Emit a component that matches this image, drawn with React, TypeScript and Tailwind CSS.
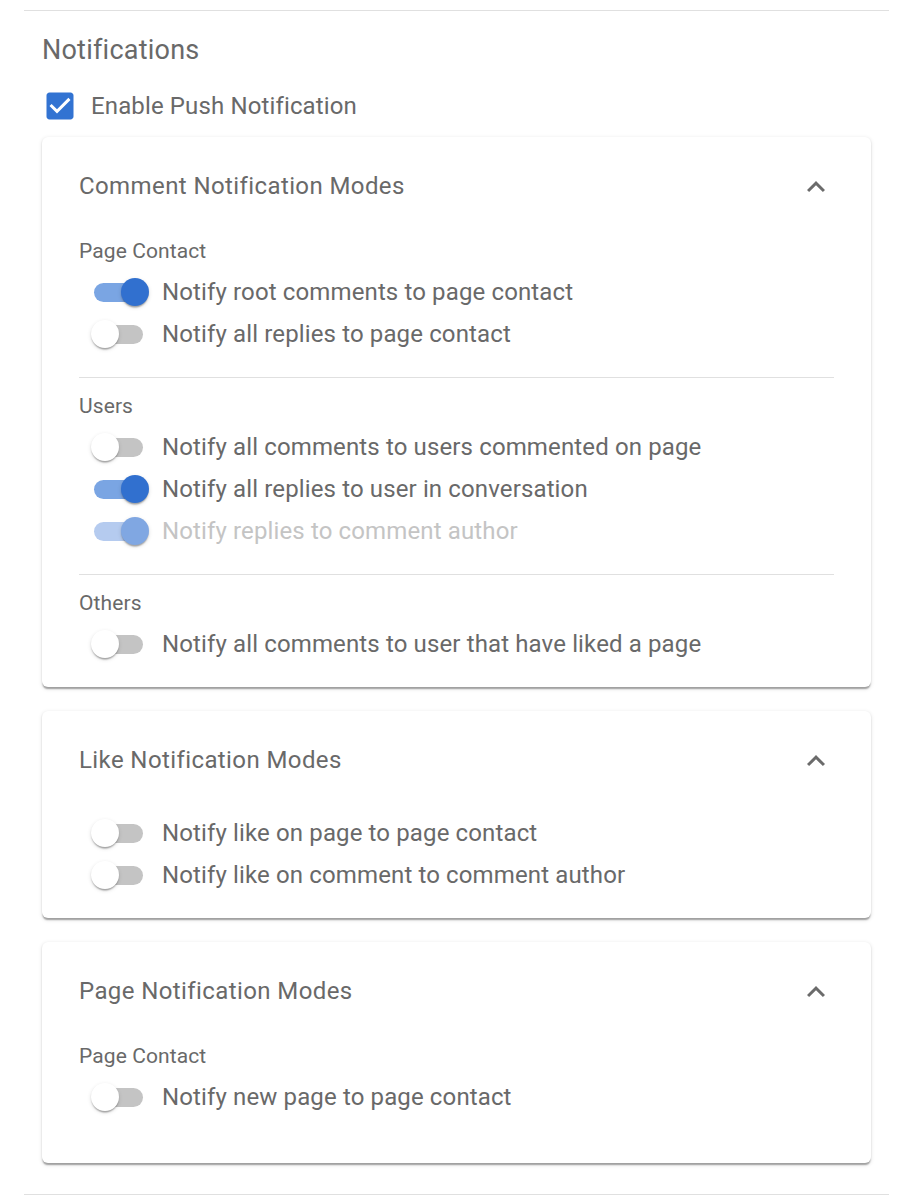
import React from "react";

type SwitchProps = { on: boolean; disabled?: boolean };

const thumbShadow =
  "shadow-[0_3px_1.5px_-1.5px_rgba(0,0,0,0.2),0_1.5px_1.5px_0_rgba(0,0,0,0.14),0_1.5px_4.5px_0_rgba(0,0,0,0.12)]";

function Toggle({ on, disabled }: SwitchProps) {
  let track = "bg-[#c4c4c4]";
  let thumb = "bg-white left-[12px]";
  if (on && !disabled) {
    track = "bg-[#7aa5e3]";
    thumb = "bg-[#3170cf] left-[42px]";
  } else if (on && disabled) {
    track = "bg-[#b5cbef]";
    thumb = "bg-[#80a7e2] left-[42px]";
  }
  return (
    <div className="relative w-[83px] h-[42px] shrink-0">
      <div className={`absolute left-[15px] top-[12px] w-[49px] h-[19px] rounded-full ${track}`} />
      <div className={`absolute top-[7px] w-[28px] h-[28px] rounded-full ${thumb} ${thumbShadow}`} />
    </div>
  );
}

function Row({ label, on, disabled }: { label: string; on: boolean; disabled?: boolean }) {
  return (
    <div className="flex items-center h-[42px]">
      <Toggle on={on} disabled={disabled} />
      <span
        className={`text-[24px] leading-[32px] tracking-[0.13px] ${disabled ? "text-[#c4c4c4]" : "text-[#696969]"}`}
      >
        {label}
      </span>
    </div>
  );
}

function Sub({ children }: { children: React.ReactNode }) {
  return <div className="text-[21px] leading-[24px] text-[#696969] tracking-[0.1px]">{children}</div>;
}

function Chevron() {
  return (
    <svg width="36" height="36" viewBox="0 0 24 24" className="shrink-0 mt-[2px]">
      <path d="M12 8l-6 6 1.41 1.41L12 10.83l4.59 4.58L18 14z" fill="#6b6b6b" />
    </svg>
  );
}

const cardShadow =
  "shadow-[0_3px_1.5px_-1.5px_rgba(0,0,0,0.2),0_1.5px_1.5px_0_rgba(0,0,0,0.14),0_1.5px_4.5px_0_rgba(0,0,0,0.12)]";

function Card({ title, children, pb }: { title: string; children: React.ReactNode; pb: string }) {
  return (
    <div className={`bg-white rounded-[6px] ${cardShadow} px-[37px] ${pb}`}>
      <div className="flex items-center justify-between h-[96px] pt-[2px]">
        <span className="text-[24px] leading-[32px] text-[#696969] tracking-[0.4px]">{title}</span>
        <Chevron />
      </div>
      {children}
    </div>
  );
}

export default function App() {
  return (
    <div className="bg-white w-[909px] min-h-[1204px] pt-[10px]" style={{ fontFamily: "Roboto, 'Noto Sans', sans-serif" }}>
      <div className="ml-[24px] mr-[20px] border-t border-[#e0e0e0] pl-[18px] pr-[18px] pb-[31px]">
        <div className="mt-[23px] text-[27px] leading-[32px] text-[#696969] tracking-[0.23px]">Notifications</div>
        <div className="mt-[22px] flex items-center h-[36px]">
          <svg width="36" height="36" viewBox="0 0 24 24" className="shrink-0">
            <path
              d="M19 3H5c-1.11 0-2 .9-2 2v14c0 1.1.89 2 2 2h14c1.11 0 2-.9 2-2V5c0-1.1-.89-2-2-2zm-9 14l-5-5 1.41-1.41L10 14.17l7.59-7.59L19 8l-9 9z"
              fill="#3273d2"
            />
          </svg>
          <span className="ml-[13px] text-[24px] leading-[32px] text-[#696969] tracking-[0.13px]">
            Enable Push Notification
          </span>
        </div>

        <div className="mt-[13px] flex flex-col gap-[24px]">
          <Card title="Comment Notification Modes" pb="pb-[22px]">
            <div className="pt-[6px]">
              <Sub>Page Contact</Sub>
              <div className="mt-[8px]">
                <Row label="Notify root comments to page contact" on />
                <Row label="Notify all replies to page contact" on={false} />
              </div>
            </div>
            <div className="mt-[22px] border-t border-[#e0e0e0]" />
            <div className="pt-[16px]">
              <Sub>Users</Sub>
              <div className="mt-[8px]">
                <Row label="Notify all comments to users commented on page" on={false} />
                <Row label="Notify all replies to user in conversation" on />
                <Row label="Notify replies to comment author" on disabled />
              </div>
            </div>
            <div className="mt-[22px] border-t border-[#e0e0e0]" />
            <div className="pt-[16px]">
              <Sub>Others</Sub>
              <div className="mt-[8px]">
                <Row label="Notify all comments to user that have liked a page" on={false} />
              </div>
            </div>
          </Card>

          <Card title="Like Notification Modes" pb="pb-[22px]">
            <div className="pt-[5px]">
              <Row label="Notify like on page to page contact" on={false} />
              <Row label="Notify like on comment to comment author" on={false} />
            </div>
          </Card>

          <Card title="Page Notification Modes" pb="pb-[45px]">
            <div className="pt-[6px]">
              <Sub>Page Contact</Sub>
              <div className="mt-[8px]">
                <Row label="Notify new page to page contact" on={false} />
              </div>
            </div>
          </Card>
        </div>
      </div>
      <div className="ml-[24px] mr-[20px] border-t border-[#e0e0e0]" />
    </div>
  );
}
